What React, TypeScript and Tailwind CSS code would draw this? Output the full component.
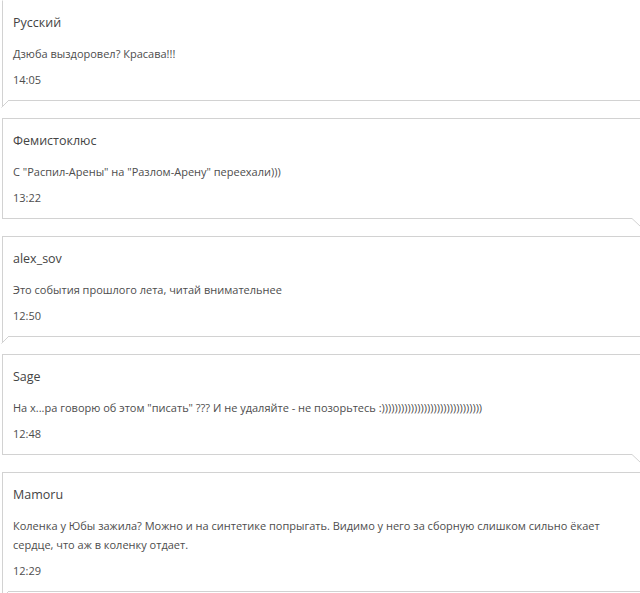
import React from "react";

type C = { name: string; text: string; time: string; tail: "left" | "right" };

const comments: C[] = [
  { name: "Русский", text: "Дзюба выздоровел? Красава!!!", time: "14:05", tail: "left" },
  { name: "Фемистоклюс", text: "С \"Распил-Арены\" на \"Разлом-Арену\" переехали)))", time: "13:22", tail: "right" },
  { name: "alex_sov", text: "Это события прошлого лета, читай внимательнее", time: "12:50", tail: "left" },
  { name: "Sage", text: "На х...ра говорю об этом \"писать\" ??? И не удаляйте - не позорьтесь :)))))))))))))))))))))))))))))))", time: "12:48", tail: "right" },
  { name: "Mamoru", text: "Коленка у Юбы зажила? Можно и на синтетике попрыгать. Видимо у него за сборную слишком сильно ёкает сердце, что аж в коленку отдает.", time: "12:29", tail: "left" },
];

function LeftTail() {
  return (
    <svg className="absolute top-full left-[-3px]" width="12" height="10" viewBox="0 0 12 10">
      <rect x="0" y="0" width="8" height="1" fill="#ffffff" />
      <line x1="2.5" y1="0" x2="2.5" y2="6" stroke="#d2d2d2" strokeWidth="1" />
      <line x1="8.5" y1="0.5" x2="1.5" y2="7.5" stroke="#d2d2d2" strokeWidth="1" />
    </svg>
  );
}

function RightTail() {
  return (
    <svg className="absolute top-full left-[626px]" width="14" height="10" viewBox="0 0 14 10">
      <rect x="3" y="0" width="11" height="1" fill="#ffffff" />
      <line x1="3" y1="0.5" x2="11.5" y2="8.5" stroke="#d2d2d2" strokeWidth="1" />
    </svg>
  );
}

function Card({ c, first }: { c: C; first: boolean }) {
  return (
    <div
      className={
        "relative ml-[2px] w-[640px] border border-[#d2d2d2] bg-white pl-[10px] pr-[10px] pt-[14px] pb-[12px] " +
        (first ? "border-t-transparent" : "")
      }
    >
      <div className="text-[12.5px] leading-[16px] text-[#444]">{c.name}</div>
      <div className="mt-[13px] text-[11px] leading-[19px] text-[#4d4d4d]">{c.text}</div>
      <div className="mt-[9px] text-[11px] leading-[16px] text-[#4d4d4d]">{c.time}</div>
      {c.tail === "left" ? <LeftTail /> : <RightTail />}
    </div>
  );
}

export default function App() {
  return (
    <div
      className="w-[640px] h-[593px] overflow-hidden bg-white"
      style={{ fontFamily: '"Open Sans", "Noto Sans", sans-serif' }}
    >
      <div className="flex flex-col gap-[17px]">
        {comments.map((c, i) => (
          <Card key={i} c={c} first={i === 0} />
        ))}
      </div>
    </div>
  );
}
